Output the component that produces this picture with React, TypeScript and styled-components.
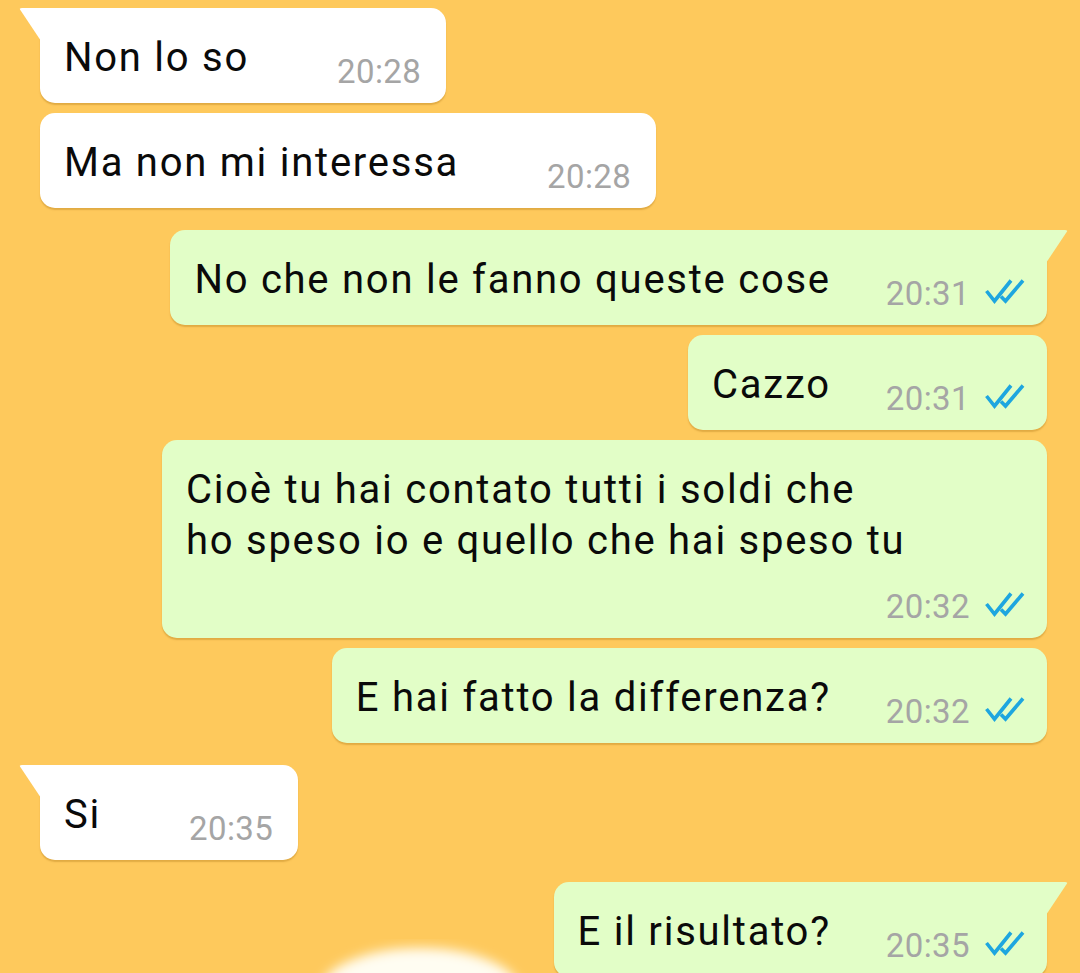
import styled, { createGlobalStyle, css } from 'styled-components';

interface MessageProps {
  id: number;
  mine: boolean;
  lines: string[];
  time: string;
  tail?: boolean;
  width?: number;
}

const messages: MessageProps[] = [
  { id: 1, mine: false, lines: ['Non lo so'], time: '20:28', tail: true },
  { id: 2, mine: false, lines: ['Ma non mi interessa'], time: '20:28' },
  { id: 3, mine: true, lines: ['No che non le fanno queste cose'], time: '20:31', tail: true },
  { id: 4, mine: true, lines: ['Cazzo'], time: '20:31' },
  {
    id: 5,
    mine: true,
    lines: ['Cioè tu hai contato tutti i soldi che', 'ho speso io e quello che hai speso tu'],
    time: '20:32',
    width: 885,
  },
  { id: 6, mine: true, lines: ['E hai fatto la differenza?'], time: '20:32' },
  { id: 7, mine: false, lines: ['Si'], time: '20:35', tail: true },
  { id: 8, mine: true, lines: ['E il risultato?'], time: '20:35', tail: true },
];

function DoubleCheck() {
  return (
    <Ticks viewBox='0 0 40 26' width={40} height={26}>
      <path d='M1.5 13 L9.5 23 L26 2.5 M16 18.5 L20.5 23 L38 2.5' />
    </Ticks>
  );
}

export default function App() {
  return (
    <>
      <GlobalStyle />
      <Chat>
        {messages.map((msg) => {
          const multi = msg.lines.length > 1;
          return (
            <Bubble
              key={msg.id}
              $mine={msg.mine}
              $tail={!!msg.tail}
              $multi={multi}
              style={msg.width ? { width: msg.width } : undefined}
            >
              <Text $multi={multi}>
                {msg.lines.map((line, i) => (
                  <span key={i}>
                    {line}
                    {i < msg.lines.length - 1 && <br />}
                  </span>
                ))}
              </Text>
              <Meta $mine={msg.mine} $multi={multi}>
                <Time>{msg.time}</Time>
                {msg.mine && <DoubleCheck />}
              </Meta>
            </Bubble>
          );
        })}
        <StickerPeek viewBox='0 0 300 80' width={300} height={80}>
          <defs>
            <filter id='soft'>
              <feGaussianBlur stdDeviation='6' />
            </filter>
          </defs>
          <ellipse cx='150' cy='82' rx='100' ry='44' fill='#fffdf2' filter='url(#soft)' />
        </StickerPeek>
      </Chat>
    </>
  );
}

const GlobalStyle = createGlobalStyle`
  html, body {
    margin: 0;
    padding: 0;
    background: #fec95c;
    height: 973px;
    overflow: hidden;
  }
  body {
    font-family: Roboto, "Noto Sans", sans-serif;
  }
`;

const Chat = styled.div`
  position: relative;
  display: flex;
  flex-direction: column;
  padding: 8px 33px 0 40px;
  box-sizing: border-box;
  width: 1080px;
  height: 973px;
  overflow: hidden;
`;

const Bubble = styled.div<{ $mine: boolean; $tail: boolean; $multi: boolean }>`
  position: relative;
  display: flex;
  flex-direction: ${(p) => (p.$multi ? 'column' : 'row')};
  align-items: flex-end;
  align-self: ${(p) => (p.$mine ? 'flex-end' : 'flex-start')};
  box-sizing: border-box;
  padding: 24px ${(p) => (p.$mine ? '22px' : '25px')} 11px 24px;
  margin-top: ${(p) => (p.$tail ? '22px' : '10px')};
  background: ${(p) => (p.$mine ? '#e2fec7' : '#ffffff')};
  border-radius: 15px;
  box-shadow: 0 2px 1.5px rgba(150, 95, 0, 0.28);

  &:first-child {
    margin-top: 0;
  }

  ${(p) =>
    p.$tail &&
    css`
      border-top-${p.$mine ? 'right' : 'left'}-radius: 0;

      &::before {
        content: '';
        position: absolute;
        top: 0;
        ${p.$mine ? 'right: -21px;' : 'left: -21px;'}
        width: 22px;
        height: 33px;
        background: ${p.$mine ? '#e2fec7' : '#ffffff'};
        border-top-${p.$mine ? 'right' : 'left'}-radius: 3px;
        clip-path: ${p.$mine
          ? 'polygon(0 0, 100% 0, 0 100%)'
          : 'polygon(0 0, 100% 0, 100% 100%)'};
      }
    `}
`;

const Text = styled.div<{ $multi: boolean }>`
  align-self: flex-start;
  font-size: 40px;
  line-height: 51px;
  letter-spacing: 1.75px;
  color: #0a0a0a;
  white-space: nowrap;
  margin-bottom: ${(p) => (p.$multi ? '21px' : '9px')};
`;

const Meta = styled.div<{ $mine: boolean; $multi: boolean }>`
  display: flex;
  align-items: center;
  gap: 15px;
  height: 40px;
  margin-left: ${(p) => (p.$multi ? '0' : p.$mine ? '55px' : '88px')};
`;

const Time = styled.span`
  font-size: 33px;
  line-height: 40px;
  letter-spacing: 0.4px;
  color: #a5a5a5;
`;

const Ticks = styled.svg`
  flex: none;
  margin-top: -6px;
  fill: none;
  stroke: #1ea6df;
  stroke-width: 3.6;
  stroke-linejoin: miter;
  stroke-linecap: butt;
`;

const StickerPeek = styled.svg`
  position: absolute;
  left: 270px;
  top: 910px;
  pointer-events: none;
`;
